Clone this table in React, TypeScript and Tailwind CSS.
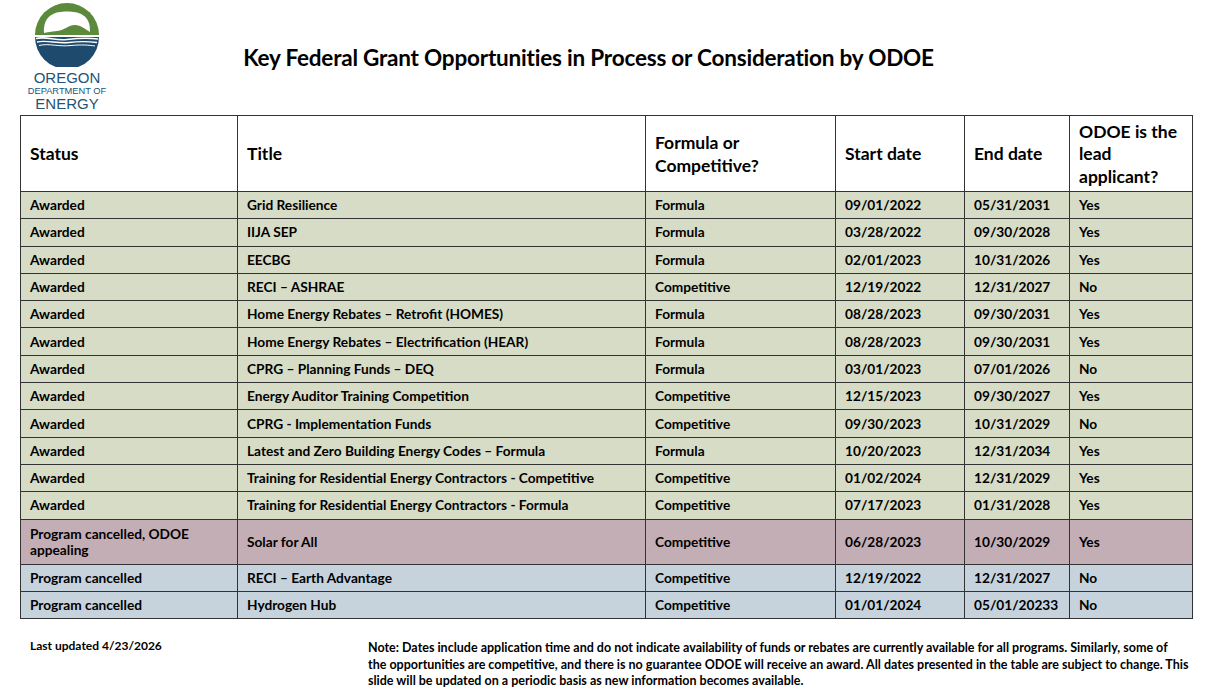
import React from "react";

type Row = { s: string; t: string; f: string; sd: string; ed: string; l: string; c: "g" | "p" | "b" };

const rows: Row[] = [
  { s: "Awarded", t: "Grid Resilience", f: "Formula", sd: "09/01/2022", ed: "05/31/2031", l: "Yes", c: "g" },
  { s: "Awarded", t: "IIJA SEP", f: "Formula", sd: "03/28/2022", ed: "09/30/2028", l: "Yes", c: "g" },
  { s: "Awarded", t: "EECBG", f: "Formula", sd: "02/01/2023", ed: "10/31/2026", l: "Yes", c: "g" },
  { s: "Awarded", t: "RECI \u2013 ASHRAE", f: "Competitive", sd: "12/19/2022", ed: "12/31/2027", l: "No", c: "g" },
  { s: "Awarded", t: "Home Energy Rebates \u2013 Retrofit (HOMES)", f: "Formula", sd: "08/28/2023", ed: "09/30/2031", l: "Yes", c: "g" },
  { s: "Awarded", t: "Home Energy Rebates \u2013 Electrification (HEAR)", f: "Formula", sd: "08/28/2023", ed: "09/30/2031", l: "Yes", c: "g" },
  { s: "Awarded", t: "CPRG \u2013 Planning Funds \u2013 DEQ", f: "Formula", sd: "03/01/2023", ed: "07/01/2026", l: "No", c: "g" },
  { s: "Awarded", t: "Energy Auditor Training Competition", f: "Competitive", sd: "12/15/2023", ed: "09/30/2027", l: "Yes", c: "g" },
  { s: "Awarded", t: "CPRG - Implementation Funds", f: "Competitive", sd: "09/30/2023", ed: "10/31/2029", l: "No", c: "g" },
  { s: "Awarded", t: "Latest and Zero Building Energy Codes \u2013 Formula", f: "Formula", sd: "10/20/2023", ed: "12/31/2034", l: "Yes", c: "g" },
  { s: "Awarded", t: "Training for Residential Energy Contractors - Competitive", f: "Competitive", sd: "01/02/2024", ed: "12/31/2029", l: "Yes", c: "g" },
  { s: "Awarded", t: "Training for Residential Energy Contractors - Formula", f: "Competitive", sd: "07/17/2023", ed: "01/31/2028", l: "Yes", c: "g" },
  { s: "Program cancelled, ODOE appealing", t: "Solar for All", f: "Competitive", sd: "06/28/2023", ed: "10/30/2029", l: "Yes", c: "p" },
  { s: "Program cancelled", t: "RECI \u2013 Earth Advantage", f: "Competitive", sd: "12/19/2022", ed: "12/31/2027", l: "No", c: "b" },
  { s: "Program cancelled", t: "Hydrogen Hub", f: "Competitive", sd: "01/01/2024", ed: "05/01/20233", l: "No", c: "b" },
];

function Logo() {
  return (
    <div className="flex flex-col items-center w-[80px]">
      <svg width="64" height="64" viewBox="0 0 64 64">
        <path d="M0 32 A32 32 0 0 1 64 32 Z" fill="#5b8a3c" />
        <path d="M9 30 C8 12 20 8.5 32 8.5 C44 8.5 56 12 55 29 C50 26 46 22 40 22 C33 22 30 27 22 28 C16 29 12 29 9 30 Z" fill="#fff" />
        <path d="M0 34 A32 32 0 0 0 64 34 Z" fill="#1e4a6d" />
        <path d="M1 35.5 C12 33 20 38 32 36.5 C44 35 52 34.5 63 36" stroke="#fff" strokeWidth="1.6" fill="none" />
        <path d="M2 39 C12 36.5 22 41 34 39.5 C46 38 54 38.5 62 39.5" stroke="#fff" strokeWidth="1.3" fill="none" />
        <path d="M4 42.5 C14 40 24 44 36 42.5 C46 41.5 54 42 60 43" stroke="#fff" strokeWidth="1" fill="none" />
      </svg>
      <div className="text-[#215478] leading-none text-center mt-[3px]" style={{ fontFamily: "'Liberation Sans', Arial, sans-serif" }}>
        <div className="text-[15px]">OREGON</div>
        <div className="text-[9.3px] mt-[2px] whitespace-nowrap">DEPARTMENT OF</div>
        <div className="text-[15px]">ENERGY</div>
      </div>
    </div>
  );
}

const bg = { g: "bg-[#d7dcc6]", p: "bg-[#c4aeb6]", b: "bg-[#c6d3dc]" };

export default function App() {
  const font = { fontFamily: "Lato, 'Noto Sans', sans-serif" };
  const td = "border-[1.5px] border-[#333] pl-[9px] pr-2 text-[13.7px] font-bold text-black leading-[16px]";
  return (
    <div className="w-[1216px] h-[696px] bg-white relative overflow-hidden" style={font}>
      <div className="flex items-start h-[115px]">
        <div className="ml-[27px] mt-[3px]">
          <Logo />
        </div>
        <div className="flex-1 text-center pr-[146px] mt-[41px] text-[22.5px] font-bold text-black tracking-[-0.2px]">
          Key Federal Grant Opportunities in Process or Consideration by ODOE
        </div>
      </div>
      <table className="ml-[20px] border-collapse table-fixed w-[1172px]">
        <colgroup>
          <col className="w-[217px]" />
          <col className="w-[408px]" />
          <col className="w-[190px]" />
          <col className="w-[129px]" />
          <col className="w-[105px]" />
          <col className="w-[123px]" />
        </colgroup>
        <thead>
          <tr className="h-[76px] text-[17.5px] font-bold text-black text-left">
            {["Status", "Title", "Formula or Competitive?", "Start date", "End date", "ODOE is the lead applicant?"].map((h, i) => (
              <th key={i} className={`border-[1.5px] border-[#333] pl-[9px] pr-2 pt-[2px] font-bold leading-[22.5px] ${i === 2 ? "pr-[40px]" : ""}`}>
                {h}
              </th>
            ))}
          </tr>
        </thead>
        <tbody>
          {rows.map((r, i) => (
            <tr key={i} className={`${bg[r.c]} ${r.c === "p" ? "h-[45px]" : "h-[27.3px]"}`}>
              <td className={`${td} ${r.c === "p" ? "pr-[30px]" : ""}`}>{r.s}</td>
              <td className={td}>{r.t}</td>
              <td className={td}>{r.f}</td>
              <td className={td}>{r.sd}</td>
              <td className={td}>{r.ed}</td>
              <td className={td}>{r.l}</td>
            </tr>
          ))}
        </tbody>
      </table>
      <div className="flex mt-[19px] font-bold text-black">
        <div className="ml-[30px] w-[338px] leading-[16px] text-[12px]">Last updated 4/23/2026</div>
        <div className="w-[840px] leading-[16.5px] mt-[2px] text-[12.5px]">
          Note: Dates include application time and do not indicate availability of funds or rebates are currently available for all programs. Similarly, some of
          <br />
          the opportunities are competitive, and there is no guarantee ODOE will receive an award. All dates presented in the table are subject to change. This
          <br />
          slide will be updated on a periodic basis as new information becomes available.
        </div>
      </div>
    </div>
  );
}
